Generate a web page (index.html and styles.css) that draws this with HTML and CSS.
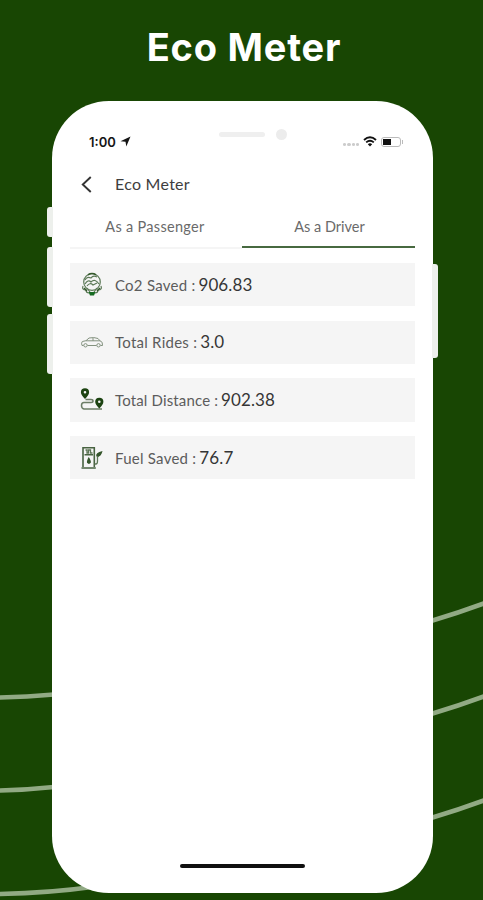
FILE: index.html
```html
<!DOCTYPE html>
<html lang="en">
<head>
<meta charset="utf-8">
<title>Eco Meter</title>
<link rel="stylesheet" href="styles.css">
</head>
<body>
<svg class="waves" viewBox="0 0 483 900" aria-hidden="true">
  <path d="M-2 697.5Q26 697 54 694.500M-2 790.500Q26 790 54 787M-2 894Q50 893 92 887M431 621Q458 613 485 603M431 714Q458 706 485 696M431 818Q458 810 485 800"/>
</svg>
<h1 class="headline">Eco Meter</h1>
<main class="phone">
  <i class="key key-mute"></i><i class="key key-up"></i><i class="key key-down"></i><i class="key key-power"></i>
  <div class="status">
    <span class="clock">1:00</span>
    <svg class="locate" viewBox="0 0 11 11"><path d="M0.500 5.200L10.500 .5L6.300 10.500L5.500 5.800Z"/></svg>
    <span class="speaker"></span><span class="camera"></span>
    <span class="signal"><i></i><i></i><i></i><i></i></span>
    <svg class="wifi" viewBox="0 0 14 11"><path d="M1 4Q7-1.300 13 4M3.200 6.400Q7 3.100 10.800 6.400" fill="none" stroke="#111" stroke-width="1.900"/><path d="M4.800 8.200Q7 6.500 9.200 8.200L7 10.600Z" fill="#111"/></svg>
    <span class="battery"><i></i></span>
  </div>
  <header class="bar">
    <svg class="back" viewBox="0 0 10 16"><path d="M9 1L1.500 8L9 15"/></svg>
    <h2>Eco Meter</h2>
  </header>
  <nav class="tabs"><span class="tab passenger">As a Passenger</span><span class="tab driver active">As a Driver</span></nav>
  <section class="list">
    <div class="row">
      <svg class="icon" viewBox="0 0 24 26">
        <g fill="none" stroke="#5c7957" stroke-width="1.200"><circle cx="12" cy="10" r="8.300"/><path d="M5 8Q7 4 11 6Q13 3 17 5M5 12Q8 7 11 10Q15 6 19 12M7 14Q10 10 13 13L17 11M3 14Q1.500 18 6 18Q6 21 9 21M21 14Q22.500 18 18 18Q18 21 15 21M7 16L10 20M17 16L14 20"/></g>
        <path d="M8 2.800Q12 .2 16 2.800M4 16L7 19M20 16L17 19" fill="none" stroke="#34592c" stroke-width="1.500"/><path d="M8.500 20H15.500L14 23.500H10Z" fill="#176b22"/>
      </svg>
      <span class="label co2">Co2 Saved :</span><span class="value v-co2">906.83</span>
    </div>
    <div class="row">
      <svg class="icon" viewBox="0 0 24 26"><g fill="none" stroke="#83927f" stroke-width="1"><path d="M3.500 16.500H2Q1 14 2.300 12.500L6 11.700L9 9Q14 7.900 18 9.500L20 11.800Q23 12.500 22.500 16.500H20.500M7.500 16.500H16.500M6 11.800H20M13 9V12"/><circle cx="5.500" cy="16.300" r="1.700"/><circle cx="18.500" cy="16.300" r="1.700"/></g></svg>
      <span class="label rides">Total Rides :</span><span class="value v-rides">3.0</span>
    </div>
    <div class="row">
      <svg class="icon" viewBox="0 0 24 26">
        <path d="M5.500 12.500H11Q13 12.500 13 14T11 15.500H4Q1.500 15.500 1.500 18.500T4 22H22" fill="none" stroke="#6c7d66" stroke-width="1.500"/>
        <path fill="#1c4311" fill-rule="evenodd" d="M5 1.200A4.100 4.100 0 0 1 9.100 5.300Q9.100 7.900 5 12Q.9 7.900 .9 5.300A4.100 4.100 0 0 1 5 1.200ZM5 4A1.300 1.300 0 1 0 5 6.600A1.300 1.300 0 1 0 5 4ZM19.300 10.700A4.100 4.100 0 0 1 23.400 14.800Q23.400 17.400 19.300 21.500Q15.200 17.400 15.200 14.800A4.100 4.100 0 0 1 19.300 10.700ZM19.300 13.500A1.300 1.300 0 1 0 19.300 16.100A1.300 1.300 0 1 0 19.300 13.500Z"/>
      </svg>
      <span class="label distance">Total Distance :</span><span class="value v-distance">902.38</span>
    </div>
    <div class="row">
      <svg class="icon" viewBox="0 0 24 26">
        <path d="M3 22V2.800H14.300V22M1.500 23H15.800M4.500 9.800H13" fill="none" stroke="#486341" stroke-width="1.600"/>
        <path d="M5.500 5H7V8H8.500V5H10.500V8H12.500M14.500 19H16Q17.500 19 17.500 16V12L20.500 9" fill="none" stroke="#5d7656" stroke-width="1.300"/>
        <path d="M8.700 12Q11.400 16 10.800 17.800Q9 20 7 17.800Q6.500 16 8.700 12ZM16.300 11.500Q15 7.500 22.500 6Q21.500 12 16.300 11.500Z" fill="#34552b"/>
      </svg>
      <span class="label fuel">Fuel Saved :</span><span class="value v-fuel">76.7</span>
    </div>
  </section>
  <div class="home"></div>
</main>
</body>
</html>
```

FILE: styles.css
```css
* { box-sizing: border-box; }
body { margin: 0; width: 483px; height: 900px; overflow: hidden; position: relative; background: #184603; font-family: Lato, "Liberation Sans", sans-serif; }
.waves { position: absolute; inset: 0; width: 483px; height: 900px; fill: none; stroke: #91aa84; stroke-width: 4.500; }
.headline { margin: 0; height: 101px; padding-top: 24px; padding-left: 5px; text-align: center; color: #fff; font: 700 38px/46px Inter, sans-serif; letter-spacing: .8px; }
.phone { position: relative; width: 381px; height: 792px; margin-left: 52px; border-radius: 57px; background: #fff; display: flex; flex-direction: column; }
.key { position: absolute; left: -5px; width: 6px; background: #edf0ec; border-radius: 3px 0 0 3px; }
.key-mute { top: 106px; height: 30px; }
.key-up { top: 146px; height: 60px; }
.key-down { top: 213px; height: 60px; }
.key-power { left: auto; right: -5px; top: 163px; height: 94px; border-radius: 0 3px 3px 0; }
.status { height: 63px; padding: 18px 29px 0 37px; display: flex; align-items: center; }
.clock { font: 600 13px/16px Inter, sans-serif; width: 29px; color: #151515; }
.locate { width: 11px; height: 11px; margin-left: 2px; fill: #151515; }
.speaker { width: 46px; height: 5px; border-radius: 3px; margin: -15px 11px 0 88px; background: #efefef; }
.camera { width: 11px; height: 11px; border-radius: 50%; margin-top: -15px; background: #ececec; }
.signal { display: flex; gap: 1px; margin: 6px 4px 0 56px; }
.signal i { width: 3.300px; height: 3px; border-radius: 50%; background: #ccc; }
.wifi { width: 14px; height: 11px; }
.battery { width: 20px; height: 10px; margin-left: 4px; padding: 1px; border: 1px solid #bbb; border-radius: 3px; position: relative; }
.battery::after { content: ""; position: absolute; right: -3px; top: 2px; width: 1px; height: 4px; background: #bbb; }
.battery i { display: block; width: 8px; height: 6px; background: #111; }
.bar { height: 40px; display: flex; align-items: center; padding-left: 29px; }
.back { width: 11px; height: 17px; fill: none; stroke: #333; stroke-width: 1.800; }
.bar h2 { margin: 0 0 0 23px; font-size: 16px; font-weight: 400; line-height: 22px; letter-spacing: .27px; color: #3e3e3e; }
.tabs { display: flex; margin: 0 18px; height: 44px; }
.tab { width: 172px; text-align: center; font-size: 14.500px; line-height: 46px; border-bottom: 2px solid #f5f5f5; height: 45px; color: #6a6a6a; letter-spacing: .3px; padding-right: 2px; }
.tab.active { width: 173px; padding: 0 0 0 2px; letter-spacing: 0; border-bottom: 2px solid #476940; height: 44px; }
.list { display: flex; flex-direction: column; gap: 14.500px; margin: 15px 18px 0; }
.row { height: 43.200px; background: #f5f5f5; display: flex; align-items: center; padding-left: 10px; }
.icon { width: 24px; height: 26px; flex: none; }
.label { margin-left: 11px; font-size: 15px; line-height: 22px; color: #5c5c5c; white-space: pre; letter-spacing: .25px; }
.distance { letter-spacing: .15px; }
.value { font-size: 17px; line-height: 22px; color: #353535; margin-left: 3px; letter-spacing: .1px; }
.home { width: 125px; height: 4px; border-radius: 2px; background: #101010; margin: auto auto 25px 128px; }
```
